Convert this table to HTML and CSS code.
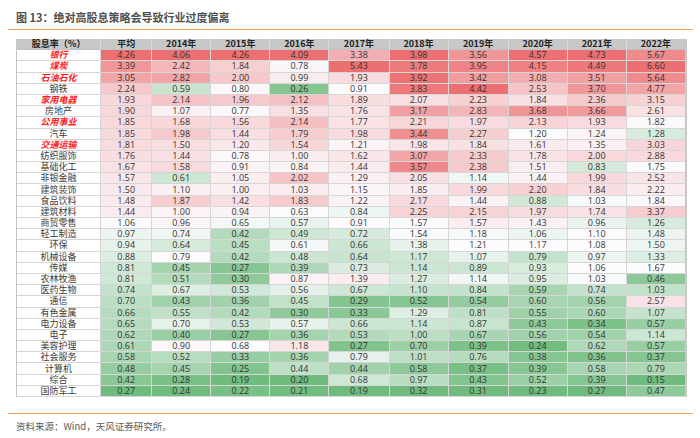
FILE: index.html
```html
<!DOCTYPE html>
<html lang="zh-CN">
<head>
<meta charset="utf-8">
<title>图 13</title>
<link rel="stylesheet" href="styles.css">
</head>
<body>
<h1 class="title">图 13：绝对高股息策略会导致行业过度偏离</h1>
<div class="rule"></div>
<table class="heat" id="heat">
  <colgroup><col class="c-name"><col class="c-avg"><col class="c-y"><col class="c-y"><col class="c-y"><col class="c-y60"><col class="c-y"><col class="c-y60"><col class="c-y"><col class="c-y"><col class="c-last"></colgroup>
  <thead>
  <tr class="head"><th>股息率（%）</th><th>平均</th><th>2014年</th><th>2015年</th><th>2016年</th><th>2017年</th><th>2018年</th><th>2019年</th><th>2020年</th><th>2021年</th><th>2022年</th></tr>
  </thead>
  <tbody>
  <tr><td class="name hl">银行</td><td>4.26</td><td>4.06</td><td>4.26</td><td>4.09</td><td>3.38</td><td>3.98</td><td>3.56</td><td>4.57</td><td>4.73</td><td>5.67</td></tr>
  <tr><td class="name hl">煤炭</td><td>3.39</td><td>2.42</td><td>1.84</td><td>0.78</td><td>5.43</td><td>3.78</td><td>3.95</td><td>4.15</td><td>4.49</td><td>6.60</td></tr>
  <tr><td class="name hl">石油石化</td><td>3.05</td><td>2.82</td><td>2.00</td><td>0.99</td><td>1.93</td><td>3.92</td><td>3.42</td><td>3.08</td><td>3.51</td><td>5.64</td></tr>
  <tr><td class="name">钢铁</td><td>2.24</td><td>0.59</td><td>0.80</td><td>0.26</td><td>0.91</td><td>3.83</td><td>4.42</td><td>2.53</td><td>3.70</td><td>4.77</td></tr>
  <tr><td class="name hl">家用电器</td><td>1.93</td><td>2.14</td><td>1.96</td><td>2.12</td><td>1.89</td><td>2.07</td><td>2.23</td><td>1.84</td><td>2.36</td><td>3.15</td></tr>
  <tr><td class="name">房地产</td><td>1.90</td><td>1.07</td><td>0.77</td><td>1.35</td><td>1.76</td><td>3.17</td><td>2.83</td><td>3.68</td><td>3.66</td><td>2.61</td></tr>
  <tr><td class="name hl">公用事业</td><td>1.85</td><td>1.68</td><td>1.56</td><td>2.14</td><td>1.77</td><td>2.21</td><td>1.97</td><td>2.13</td><td>1.93</td><td>1.82</td></tr>
  <tr><td class="name">汽车</td><td>1.85</td><td>1.98</td><td>1.44</td><td>1.79</td><td>1.98</td><td>3.44</td><td>2.27</td><td>1.20</td><td>1.24</td><td>1.28</td></tr>
  <tr><td class="name hl">交通运输</td><td>1.81</td><td>1.50</td><td>1.20</td><td>1.54</td><td>1.21</td><td>1.98</td><td>1.84</td><td>1.61</td><td>1.35</td><td>3.03</td></tr>
  <tr><td class="name">纺织服饰</td><td>1.76</td><td>1.44</td><td>0.78</td><td>1.00</td><td>1.62</td><td>3.07</td><td>2.33</td><td>1.78</td><td>2.00</td><td>2.88</td></tr>
  <tr><td class="name">基础化工</td><td>1.67</td><td>1.58</td><td>0.91</td><td>0.84</td><td>1.44</td><td>3.57</td><td>2.38</td><td>1.51</td><td>0.83</td><td>1.75</td></tr>
  <tr><td class="name">非银金融</td><td>1.57</td><td>0.61</td><td>1.05</td><td>2.02</td><td>1.29</td><td>2.05</td><td>1.14</td><td>1.44</td><td>1.99</td><td>2.52</td></tr>
  <tr><td class="name">建筑装饰</td><td>1.50</td><td>1.10</td><td>1.00</td><td>1.03</td><td>1.15</td><td>1.85</td><td>1.99</td><td>2.20</td><td>1.84</td><td>2.22</td></tr>
  <tr><td class="name">食品饮料</td><td>1.48</td><td>1.87</td><td>1.42</td><td>1.83</td><td>1.22</td><td>2.17</td><td>1.44</td><td>0.88</td><td>1.03</td><td>1.84</td></tr>
  <tr><td class="name">建筑材料</td><td>1.44</td><td>1.00</td><td>0.94</td><td>0.63</td><td>0.84</td><td>2.25</td><td>2.15</td><td>1.97</td><td>1.74</td><td>3.37</td></tr>
  <tr><td class="name">商贸零售</td><td>1.06</td><td>0.96</td><td>0.65</td><td>0.57</td><td>0.91</td><td>1.57</td><td>1.57</td><td>1.43</td><td>0.96</td><td>1.26</td></tr>
  <tr><td class="name">轻工制造</td><td>0.97</td><td>0.74</td><td>0.42</td><td>0.49</td><td>0.72</td><td>1.54</td><td>1.18</td><td>1.06</td><td>1.10</td><td>1.48</td></tr>
  <tr><td class="name">环保</td><td>0.94</td><td>0.64</td><td>0.45</td><td>0.61</td><td>0.66</td><td>1.38</td><td>1.21</td><td>1.17</td><td>1.08</td><td>1.50</td></tr>
  <tr><td class="name">机械设备</td><td>0.88</td><td>0.79</td><td>0.42</td><td>0.48</td><td>0.64</td><td>1.17</td><td>1.07</td><td>0.79</td><td>0.97</td><td>1.33</td></tr>
  <tr><td class="name">传媒</td><td>0.81</td><td>0.45</td><td>0.27</td><td>0.39</td><td>0.73</td><td>1.14</td><td>0.89</td><td>0.93</td><td>1.06</td><td>1.67</td></tr>
  <tr><td class="name">农林牧渔</td><td>0.81</td><td>0.51</td><td>0.30</td><td>0.87</td><td>1.39</td><td>1.27</td><td>1.14</td><td>0.95</td><td>1.03</td><td>0.46</td></tr>
  <tr><td class="name">医药生物</td><td>0.74</td><td>0.67</td><td>0.53</td><td>0.56</td><td>0.67</td><td>1.10</td><td>0.84</td><td>0.59</td><td>0.74</td><td>1.03</td></tr>
  <tr><td class="name">通信</td><td>0.70</td><td>0.43</td><td>0.36</td><td>0.45</td><td>0.29</td><td>0.52</td><td>0.54</td><td>0.60</td><td>0.56</td><td>2.57</td></tr>
  <tr><td class="name">有色金属</td><td>0.66</td><td>0.55</td><td>0.42</td><td>0.30</td><td>0.33</td><td>1.29</td><td>0.81</td><td>0.55</td><td>0.60</td><td>1.07</td></tr>
  <tr><td class="name">电力设备</td><td>0.65</td><td>0.70</td><td>0.53</td><td>0.57</td><td>0.66</td><td>1.14</td><td>0.87</td><td>0.43</td><td>0.34</td><td>0.57</td></tr>
  <tr><td class="name">电子</td><td>0.62</td><td>0.40</td><td>0.27</td><td>0.36</td><td>0.53</td><td>1.00</td><td>0.67</td><td>0.56</td><td>0.54</td><td>1.14</td></tr>
  <tr><td class="name">美容护理</td><td>0.61</td><td>0.90</td><td>0.68</td><td>1.18</td><td>0.27</td><td>0.70</td><td>0.39</td><td>0.24</td><td>0.62</td><td>0.57</td></tr>
  <tr><td class="name">社会服务</td><td>0.58</td><td>0.52</td><td>0.33</td><td>0.36</td><td>0.79</td><td>1.01</td><td>0.76</td><td>0.38</td><td>0.36</td><td>0.37</td></tr>
  <tr><td class="name">计算机</td><td>0.48</td><td>0.45</td><td>0.25</td><td>0.44</td><td>0.44</td><td>0.58</td><td>0.37</td><td>0.39</td><td>0.58</td><td>0.79</td></tr>
  <tr><td class="name">综合</td><td>0.42</td><td>0.28</td><td>0.19</td><td>0.20</td><td>0.68</td><td>0.97</td><td>0.43</td><td>0.52</td><td>0.39</td><td>0.15</td></tr>
  <tr><td class="name">国防军工</td><td>0.27</td><td>0.24</td><td>0.22</td><td>0.21</td><td>0.19</td><td>0.32</td><td>0.31</td><td>0.23</td><td>0.27</td><td>0.47</td></tr>
  </tbody>
</table>
<div class="rule rule-bottom"></div>
<p class="source">资料来源：Wind，天风证券研究所。</p>
<script src="script.js"></script>
</body>
</html>
```
FILE: styles.css
```css
html, body {
  margin: 0;
  padding: 0;
  background: #ffffff;
}
body {
  width: 700px;
  height: 438px;
  overflow: hidden;
  font-family: "Open Sans", "Noto Sans CJK SC", sans-serif;
}
.title {
  margin: 0;
  padding: 9px 0 0 16px;
  height: 16px;
  line-height: 16px;
  font-size: 11px;
  font-weight: bold;
  color: #505050;
  font-family: "Noto Sans CJK SC", sans-serif;
}
.rule {
  margin: 4px 0 0 8px;
  width: 685px;
  height: 1px;
  background: #f0a05c;
}
.heat {
  margin: 9px 0 0 16px;
  table-layout: fixed;
  border-collapse: separate;
  border-spacing: 0;
  width: 671px;
  border-left: 1px solid #c4c4c4;
  border-right: 2px solid #c8c8c8;
  font-size: 9px;
  color: #333333;
}
.c-name { width: 84px; }
.c-avg { width: 51px; }
.c-y { width: 59px; }
.c-y60 { width: 60px; }
.c-last { width: 58px; }
.heat tr {
  height: 11.2px;
}
.heat th,
.heat td {
  padding: 0;
  text-align: center;
  vertical-align: middle;
  line-height: 10px;
  white-space: nowrap;
  border-right: 1px solid #d6d6d6;
  border-bottom: 1px solid #d6d6d6;
  background: #ffffff;
}
.heat th:last-child,
.heat td:last-child {
  border-right: none;
}
.heat th {
  background: #c8c8c8;
  font-weight: bold;
  color: #222222;
  border-right-color: #dcdcdc;
  border-bottom-color: #c0c0c0;
  font-family: "Noto Sans CJK SC", sans-serif;
}
.heat td.name {
  font-family: "Noto Sans CJK SC", sans-serif;
  color: #3a3a3a;
}
.heat td.name.hl {
  color: #ff1a1a;
  font-weight: bold;
  font-style: italic;
}
.rule-bottom {
  margin-top: 16px;
}
.source {
  margin: 5px 0 0 16px;
  font-size: 9.5px;
  line-height: 14px;
  color: #5a5a5a;
  font-family: "Noto Sans CJK SC", sans-serif;
}
```
FILE: script.js
```js
(function () {
  var rows = Array.prototype.slice.call(document.querySelectorAll('#heat tbody tr'));
  var green = [112, 188, 126], white = [252, 252, 255], red = [236, 112, 114];
  function lerp(a, b, t) {
    return [0, 1, 2].map(function (i) { return Math.round(a[i] + (b[i] - a[i]) * t); });
  }
  for (var c = 1; c <= 10; c++) {
    var cells = rows.map(function (r) { return r.children[c]; });
    var vals = cells.map(function (el) { return parseFloat(el.textContent); });
    var sorted = vals.slice().sort(function (a, b) { return a - b; });
    var min = sorted[0], max = sorted[sorted.length - 1];
    var n = sorted.length, pos = (n - 1) * 0.5, lo = Math.floor(pos), hi = Math.ceil(pos);
    var mid = sorted[lo] + (sorted[hi] - sorted[lo]) * (pos - lo);
    cells.forEach(function (el, i) {
      var v = vals[i], col;
      if (v <= mid) {
        col = lerp(green, white, mid === min ? 1 : (v - min) / (mid - min));
      } else {
        col = lerp(white, red, (v - mid) / (max - mid));
      }
      el.style.backgroundColor = 'rgb(' + col.join(',') + ')';
    });
  }
})();
```
